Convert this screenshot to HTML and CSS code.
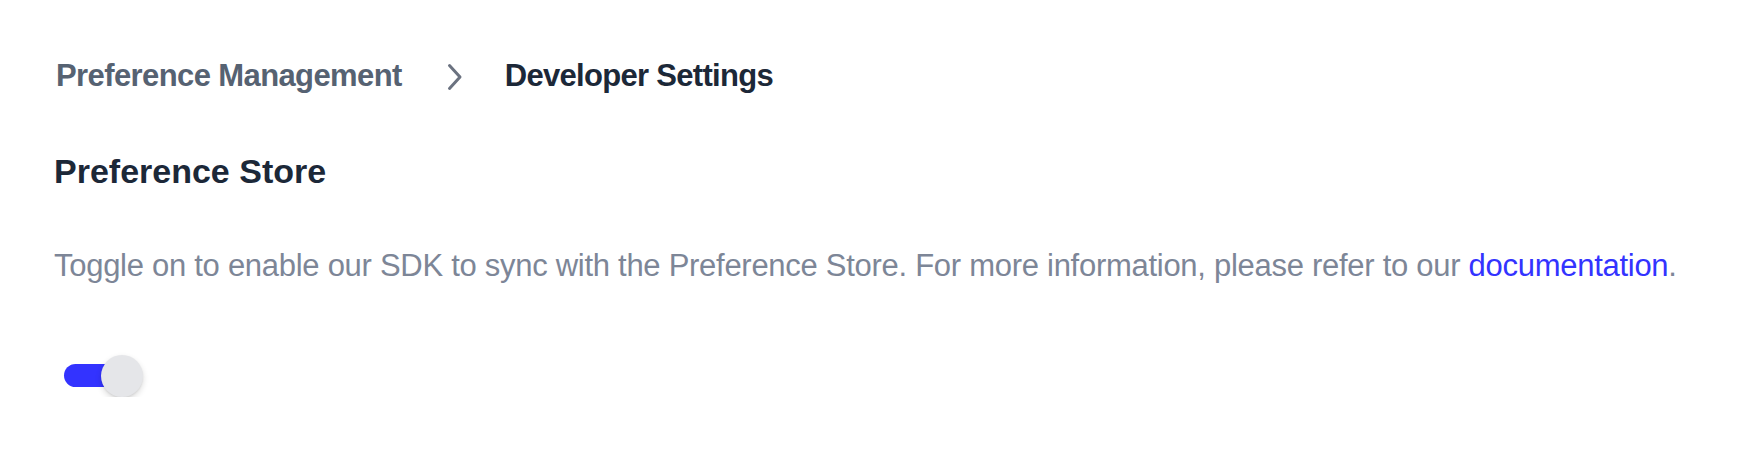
FILE: index.html
```html
<!DOCTYPE html>
<html lang="en">
<head>
<meta charset="utf-8">
<title>Developer Settings</title>
<link rel="stylesheet" href="styles.css">
</head>
<body>
<main class="page">
  <nav class="breadcrumb">
    <a class="crumb crumb-link" href="#">Preference Management</a>
    <svg class="chevron" width="16" height="28" viewBox="0 0 16 28" aria-hidden="true">
      <path d="M2.5 2.5 L13 14 L2.5 25.5" fill="none" stroke="#6b7280" stroke-width="3" stroke-linecap="round" stroke-linejoin="round"/>
    </svg>
    <span class="crumb crumb-current">Developer Settings</span>
  </nav>
  <h1 class="title">Preference Store</h1>
  <p class="desc">Toggle on to enable our SDK to sync with the Preference Store. For more information, please refer to our <a class="link" href="#">documentation</a>.</p>
  <div class="toggle" role="switch" aria-checked="true">
    <span class="track"></span>
    <span class="thumb"></span>
  </div>
</main>
</body>
</html>
```

FILE: styles.css
```css
html, body {
  margin: 0;
  padding: 0;
  background: #ffffff;
}
body {
  font-family: "Liberation Sans", Arial, sans-serif;
}
.page {
  padding: 57px 0 0 54px;
}
.breadcrumb {
  display: flex;
  align-items: center;
  height: 37px;
  padding-left: 2px;
}
.crumb {
  font-size: 31px;
  line-height: 37px;
  font-weight: 700;
  letter-spacing: -0.6px;
  text-decoration: none;
}
.crumb-link {
  color: #566272;
}
.crumb-current {
  color: #1c2838;
  letter-spacing: -0.7px;
}
.chevron {
  display: block;
  margin: 2px 42px 0 45px;
}
.title {
  margin: 57px 0 0 0;
  font-size: 34px;
  line-height: 40px;
  font-weight: 700;
  letter-spacing: 0;
  color: #1c2838;
}
.desc {
  margin: 57px 0 0 0;
  font-size: 31px;
  line-height: 36px;
  font-weight: 400;
  color: #7d8697;
  letter-spacing: -0.28px;
}
.link {
  color: #3333ff;
  text-decoration: none;
}
.toggle {
  position: relative;
  margin: 71px 0 0 10px;
  width: 80px;
  height: 42px;
}
.track {
  position: absolute;
  left: 0;
  top: 9px;
  width: 66px;
  height: 23px;
  border-radius: 12px;
  background: #3333ff;
}
.thumb {
  position: absolute;
  left: 37px;
  top: 0;
  width: 42px;
  height: 42px;
  border-radius: 50%;
  background: #e5e6e9;
  box-shadow: 0 3px 6px rgba(0, 0, 0, 0.14), 0 1px 2px rgba(0, 0, 0, 0.08);
}
```
